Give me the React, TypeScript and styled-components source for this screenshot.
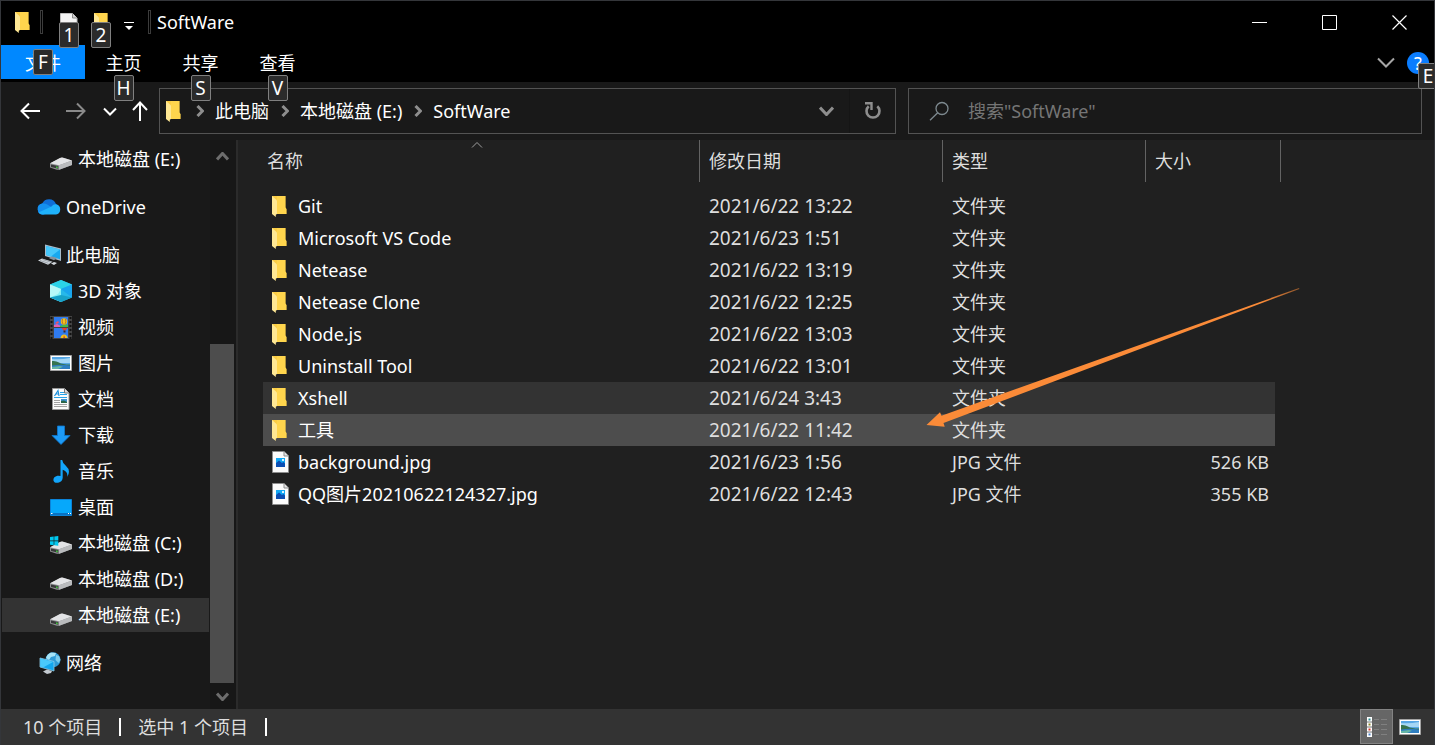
import React from "react";
import styled, { createGlobalStyle, css } from "styled-components";

const GlobalStyle = createGlobalStyle`
  *, *::before, *::after { box-sizing: border-box; }
  body {
    margin: 0;
    background: #191919;
    color: #fff;
    font: 18px/24px "Noto Sans", "Noto Sans CJK SC", sans-serif;
  }
  button, input { font: inherit; color: inherit; }
  button { border: 0; padding: 0; background: none; }
  svg { display: block; flex: none; }
`;

/* ---------- window frame ---------- */

const Window = styled.div`
  display: flex;
  flex-direction: column;
  min-height: 100vh;
  border: 1px solid #34363a;
  border-bottom: 0;
  overflow: hidden;
`;

const TitleBar = styled.header`
  display: flex;
  align-items: center;
  height: 44px;
  padding: 0 0 2px 14px;
  background: #000;
`;

const TitleDivider = styled.span`
  width: 3px;
  height: 24px;
  border: 1px solid #3c3c3c;
`;

const QuickTools = styled.div`
  display: flex;
  align-items: center;
  flex: none;
  gap: 14px;
  margin: 0 14px 0 17px;
`;

const AppIcon = styled.span`
  margin-right: 10px;
`;

const QuickButton = styled.button<{ $menu?: boolean }>`
  position: relative;
  display: flex;
  justify-content: center;
  align-items: ${(p) => (p.$menu ? "flex-end" : "flex-start")};
  width: ${(p) => (p.$menu ? 10 : 18)}px;
  height: 18px;
`;

const WindowTitle = styled.h1`
  flex: 1;
  margin: 0 0 0 6px;
  font-size: 18px;
  font-weight: 400;
`;

const CaptionButton = styled.button`
  display: flex;
  align-items: center;
  justify-content: center;
  width: 70px;
  height: 42px;
`;

const KeyTip = styled.kbd<{ $top: number; $left?: string }>`
  position: absolute;
  z-index: 2;
  top: ${(p) => p.$top}px;
  left: ${(p) => p.$left ?? "50%"};
  transform: translateX(-50%);
  width: 20px;
  height: 26px;
  border: 1px solid #808080;
  border-radius: 2px;
  background: #2b2b2b;
  color: #fff;
  font: 19px/24px "Noto Sans", sans-serif;
  text-align: center;
`;

const Ribbon = styled.nav`
  display: flex;
  height: 37px;
  background: #000;
`;

const RibbonTab = styled.button<{ $file?: boolean }>`
  position: relative;
  width: ${(p) => (p.$file ? 84 : 77)}px;
  height: 34px;
  padding-top: 2px;
  background: ${(p) => (p.$file ? "#0088ff" : "none")};
`;

const RibbonEnd = styled.div`
  display: flex;
  align-items: center;
  gap: 12px;
  margin-left: auto;
  padding: 0 5px 2px 0;
`;

const HelpButton = styled.button`
  position: relative;
  width: 22px;
  height: 22px;
  border-radius: 50%;
  background: #0a7dff;
  line-height: 22px;
`;

/* ---------- navigation row ---------- */

const NavRow = styled.div`
  display: flex;
  align-items: center;
  height: 58px;
  padding: 0 12px 0 18px;
  background: #191919;
`;

const NavButton = styled.button<{ $gap: number }>`
  margin-right: ${(p) => p.$gap}px;
`;

const AddressBar = styled.div`
  display: flex;
  align-items: center;
  flex: 729 1 0;
  height: 46px;
  padding-left: 6px;
  border: 1px solid #535353;
`;

const Crumbs = styled.ol`
  display: flex;
  align-items: center;
  flex: 1;
  margin: 0 0 0 3px;
  padding: 0;
  list-style: none;
`;

const Crumb = styled.li`
  display: flex;
  align-items: center;
  gap: 11px;
  margin-left: 12px;
  white-space: nowrap;
`;

const CrumbLink = styled.a`
  color: #fff;
  text-decoration: none;
`;

const AddressButton = styled.button`
  display: flex;
  align-items: center;
  justify-content: center;
  width: 46px;
  height: 44px;
  & + & { border-left: 1px solid #151515; }
`;

const SearchBox = styled.label`
  display: flex;
  align-items: center;
  flex: 492 1 0;
  gap: 19px;
  height: 46px;
  margin-left: 12px;
  padding-left: 20px;
  border: 1px solid #535353;
`;

const SearchInput = styled.input`
  flex: 1;
  min-width: 0;
  padding: 0;
  border: 0;
  outline: 0;
  background: none;
  &::placeholder { color: #757575; opacity: 1; }
`;

/* ---------- body ---------- */

const Main = styled.div`
  display: flex;
  flex: 1;
`;

const Sidebar = styled.aside`
  display: flex;
  width: 237px;
  border-right: 2px solid #2b2b2b;
  background: #191919;
`;

const Tree = styled.nav`
  display: flex;
  flex-direction: column;
  flex: 1;
  gap: 14px;
  padding: 2px 1px 29px;
`;

const TreeGroup = styled.div`
  display: flex;
  flex-direction: column;
  gap: 2px;
`;

const TreeRow = styled.a<{ $level: number; $selected?: boolean }>`
  display: flex;
  align-items: center;
  gap: 4px;
  height: 34px;
  padding-left: ${(p) => (p.$level === 1 ? 36 : 48)}px;
  background: ${(p) => (p.$selected ? "#333" : "none")};
  color: #fff;
  text-decoration: none;
  white-space: nowrap;
`;

const TreeIcon = styled.span`
  display: flex;
  width: 24px;
`;

const Scrollbar = styled.div`
  display: flex;
  flex-direction: column;
  width: 26px;
  padding-right: 2px;
  background: #171717;
`;

const ScrollButton = styled.button<{ $height: number }>`
  display: flex;
  align-items: center;
  justify-content: center;
  height: ${(p) => p.$height}px;
`;

const ScrollSpace = styled.div`
  flex: 172 1 0;
`;

const ScrollThumb = styled.div`
  flex: 339 1 0;
  background: #4d4d4d;
`;

const FilePane = styled.main`
  position: relative;
  flex: 1;
  padding-left: 25px;
  background: #202020;
`;

const FileTable = styled.table`
  width: 1018px;
  table-layout: fixed;
  border-spacing: 0;
  text-align: left;
`;

const HeaderCell = styled.th<{ $width: number }>`
  position: relative;
  width: ${(p) => p.$width}px;
  height: 50px;
  padding: 0 0 8px;
  color: #dedede;
  font-weight: 400;
`;

const HeaderLabel = styled.div<{ $indent: number }>`
  height: 42px;
  padding-left: ${(p) => p.$indent}px;
  border-right: 1px solid #636363;
  line-height: 42px;
`;

const SortMark = styled.span`
  position: absolute;
  top: 1px;
  left: 49%;
  transform: translateX(-50%);
`;

const stateColor = { hover: "#333333", selected: "#4d4d4d" };

const FileRow = styled.tr<{ $state?: "hover" | "selected" }>`
  height: 32px;
  ${(p) =>
    p.$state &&
    css`
      & > td { background-color: ${stateColor[p.$state]}; }
    `}
`;

const Cell = styled.td`
  padding: 0 0 0 9px;
  color: #dedede;
  white-space: nowrap;
`;

const NameCell = styled(Cell)`
  padding-left: 9px;
  color: #fff;
`;

const DateCell = styled(Cell)`
  font-size: 19px;
`;

const SizeCell = styled(Cell)`
  padding-right: 6px;
  border-right: 6px solid transparent;
  background-clip: padding-box;
  text-align: right;
`;

const FileName = styled.div`
  display: flex;
  align-items: center;
  gap: 8px;
`;

const FileIconBox = styled.span`
  width: 18px;
`;

const Pointer = styled.svg`
  position: absolute;
  top: 147px;
  left: 688px;
  pointer-events: none;
`;

/* ---------- status bar ---------- */

const StatusBar = styled.footer`
  display: flex;
  align-items: center;
  height: 36px;
  padding: 0 8px 1px 22px;
  background: #333;
  color: #dedede;
`;

const StatusDivider = styled.span`
  width: 2px;
  height: 18px;
  margin: 0 17px;
  background: #fff;
`;

const Views = styled.div`
  display: flex;
  align-items: center;
  margin-left: auto;
`;

const ViewButton = styled.button<{ $active?: boolean }>`
  display: flex;
  align-items: center;
  justify-content: center;
  width: 33px;
  height: 35px;
  border: 1px solid ${(p) => (p.$active ? "#838383" : "transparent")};
  background: ${(p) => (p.$active ? "#666" : "none")};
`;

/* ---------- icons ---------- */

const FolderIcon = () => (
  <svg width="15" height="21" viewBox="0 0 15 21">
    <path d="M0 0h13.4v11.5l1 1.5v5H3L0 15z" fill="#fbcd45" />
    <path d="M5 0h8.4v11.5l1 1.5v5H5z" fill="#ffd54d" />
    <path d="M0 0l4 3.600c.8.7 1 1.200 1 2.400V18l-1.200.8V21L0 18z" fill="#ffe894" />
  </svg>
);

const ImageFileIcon = () => (
  <svg width="17" height="22" viewBox="0 0 17 22">
    <path d="M.5.5h11.500l4.500 4.500v16.500H.5z" fill="#fbfbfb" stroke="#8d8d8d" />
    <path d="M12 .5V5h4.500" fill="#e4e4e4" stroke="#8d8d8d" />
    <path d="M4 7h9v9H4z" fill="#12a8f5" />
    <path d="M4 12l3-2.500 3 2.500 1.500-1 1.500 1.500V16H4z" fill="#0c4fb4" />
    <path d="M10 8h2v2h-2z" fill="#d8f2ff" />
  </svg>
);

const DriveShape = () => (
  <g>
    <path d="M0 6.500L10 1q2-.8 4 0l8 2.500v4.500L10 12.500q-2 .6-4 0L0 10.500z" fill="#8f9193" />
    <path d="M0 6.300L10 1q2-.8 4 0l8 2.500L9 8.200z" fill="#e3e4e6" />
    <path d="M9 8.200L22 3.500V8L9 12.800z" fill="#b9bbbd" />
    <path d="M1 7.400l7.300 1.700v2.700L1 9.900z" fill="#38393a" />
    <path d="M6 9.400l1.700.4v1.400L6 10.800z" fill="#3fd13c" />
  </g>
);

const DriveIcon = () => (
  <svg width="22" height="22" viewBox="0 -9 22 22"><DriveShape /></svg>
);

const SystemDriveIcon = () => (
  <svg width="22" height="22" viewBox="0 -9 22 22">
    <DriveShape />
    <path d="M0-4l3.700-.5V-.4H0zM4.300-4.600L8.300-5v4.600h-4zM0 .3h3.700v3.900L0 3.700zM4.300.3h4v4.500l-4-.5z" fill="#00c8f0" />
  </svg>
);

const OneDriveIcon = () => (
  <svg width="24" height="16" viewBox="1 0 24 16" overflow="visible">
    <path d="M6 15.500a5.500 5.500 0 01-.8-10.900A7.500 7.500 0 0119 5a6 6 0 014 6l-9 3z" fill="#0f6fd8" />
    <path d="M5.200 4.600q3-.4 5 1l7.500 4.400L6 15.500a5.500 5.500 0 01-.8-10.900z" fill="#1490ee" />
    <path d="M14.500 7.600q2-2.800 5-2.200a5.200 5.200 0 01-.5 10.100H6q-2.800 0-4.500-2z" fill="#1fb2fb" />
  </svg>
);

const ComputerIcon = () => (
  <svg width="24" height="22" viewBox="0 0 24 22">
    <path d="M7 .5l16 4V17L7 12z" fill="#a9bccb" />
    <path d="M8.200 2L22 5.500v9.800L8.200 11.100z" fill="#18a9ef" />
    <path d="M8.200 2L22 5.500l-9 6.900-4.800-1.400z" fill="#46c8fb" />
    <path d="M11 14.200l3-1.700 5 1.500-3 2.300z" fill="#85929d" />
    <path d="M0 16.500L4 14.500l10.500 3.300-4.500 3z" fill="#d4d9de" />
    <path d="M2 16.500l8.500 2.800M4.500 15.500l8.300 2.600" stroke="#8d979f" strokeWidth=".8" />
    <path d="M13 19.500l3-1.500 3 1-3 2z" fill="#d4d9de" />
  </svg>
);

const CubeIcon = () => (
  <svg width="22" height="22" viewBox="0 0 22 22">
    <path d="M0 4.500L11 0l11 4.500v13L11 22 0 17.500z" fill="#27b8ea" />
    <path d="M0 4.500L11 0l11 4.500L11 9z" fill="#2bd3e8" />
    <path d="M0 4.500L11 9v13L0 17.500z" fill="#84f0f4" />
    <path d="M0 4.500L11 9 8 14 0 17.500z" fill="#b6f9f8" />
    <path d="M11 9l11-4.500v13z" fill="#19a5ee" />
    <path d="M0 17.500L11 15v7zM22 17.500L11 15v7z" fill="#18a2c9" />
  </svg>
);

const VideoIcon = () => (
  <svg width="22" height="23" viewBox="0 0 22 23">
    <path d="M0 0h22v23H0z" fill="#444" />
    <path d="M1.500 1v22M20.500 1v22" stroke="#121212" strokeWidth="2" strokeDasharray="2 2" />
    <path d="M4 1h14v10H4zM4 12h14v10H4z" fill="#2f7bf0" />
    <path d="M4 9l3-1 3 1.500V11H4z" fill="#e65fae" />
    <path d="M10 10l5-2 3 1v2h-8z" fill="#43b948" />
    <circle cx="14" cy="5.500" r="3.200" fill="#f0c21d" />
    <path d="M12.500 3q-1 3 .7 5.500M15.500 3q1 3-.7 5.500" stroke="#b5602c" strokeWidth=".8" fill="none" />
    <path d="M5 7l3-2 1 1.500L7 8z" fill="#ee5362" />
    <path d="M11.500 12h6l-2 2.500h-2z" fill="#e0422f" />
    <path d="M13.500 14.500h2v2h-2z" fill="#342c33" />
    <path d="M10.500 22q.5-3.500 3.500-3.500t3.500 3.500z" fill="#f0c21d" />
    <path d="M13.300 22l.7-3 1 3z" fill="#d33a2c" />
  </svg>
);

const PictureIcon = () => (
  <svg width="22" height="16" viewBox="0 0 22 16">
    <path d="M.5.5h21v15H.5z" fill="#fff" stroke="#a3a3a3" />
    <path d="M2 2h18v12H2z" fill="#57a8e6" />
    <path d="M2 4q8 1 18-1v5H2z" fill="#a5d7f5" />
    <path d="M2 6q4-.5 7 1.500t11 2V11H2z" fill="#35744f" />
    <path d="M2 10.500q9-1.500 18 0V14H2z" fill="#2e7ec0" />
    <path d="M2 12l8-1 3 .7L8 14H2z" fill="#65b5a5" />
  </svg>
);

const DocumentIcon = () => (
  <svg width="22" height="22" viewBox="-2 0 22 22">
    <path d="M.5.5h12l4.500 4.500v16.500H.5z" fill="#fbfbfb" stroke="#979797" />
    <path d="M12.500.5V5H17" fill="#ddd" stroke="#777" />
    <path d="M2.500 8L6 2.500 7 8M4 6h3" stroke="#1b8fdc" strokeWidth="1.200" fill="none" />
    <path d="M8 4.500h4M8 6.500h7M2 9.500h13" stroke="#27a3e8" />
    <path d="M2 12.500h6M2 14.500h6M2 16.500h13M2 18.500h13" stroke="#a2a2a2" />
    <path d="M9 11h6v4H9z" fill="#3e93d2" />
    <path d="M9 13l3-.5 3 1.500v1H9z" fill="#2a664a" />
  </svg>
);

const DownloadIcon = () => (
  <svg width="22" height="20" viewBox="0 0 22 20">
    <path d="M7.500 1h7v9.500H20L11 19.500 2 10.500h5.500z" fill="#1d9bf7" stroke="#0c77cf" strokeWidth=".8" />
  </svg>
);

const MusicIcon = () => (
  <svg width="22" height="23" viewBox="0 0 22 23">
    <path d="M10.500 0h1.700q.5 3.300 3.400 5.600 5.800 5 1.600 11.400 1-5.500-4.500-7.300v8.100q-.2 4-4.600 4.900-4.200.5-4.700-2.500-.2-3.300 4-4.400 1.800-.3 3.100.3z" fill="#12a5fb" />
  </svg>
);

const DesktopIcon = () => (
  <svg width="22" height="17" viewBox="0 0 22 17">
    <path d="M.5.5h21v16H.5z" fill="#06a8fb" stroke="#0b83d8" />
    <path d="M1 14h20v2H1z" fill="#0873c4" />
    <path d="M1 14.500h1.500M18 14.500h1M20 14.500h1" stroke="#fff" />
  </svg>
);

const NetworkIcon = () => (
  <svg width="23" height="22" viewBox="-1 0 23 22">
    <circle cx="14" cy="7.700" r="7.500" fill="#2f9bd6" />
    <path d="M7 6q1-4 5-5.500l5 .5-1 3-4 1-2 3z" fill="#a6e3f6" />
    <path d="M17 3l3 1 1.500 4-2 3-3-3z" fill="#7cccec" />
    <path d="M1 6l14 3.500v9.500L1 15z" fill="#13a7ee" stroke="#91cde9" strokeWidth=".8" />
    <path d="M1.500 6.500L14 10 4 15.500l-2.500-.7z" fill="#4ac9fb" />
    <path d="M4 19.500l4-2 5 1.500-1 2-4 1z" fill="#c3cad0" />
  </svg>
);

const DetailsIcon = () => (
  <svg width="22" height="22" viewBox="0 0 22 22">
    <path d="M1 1h5v20H1z" fill="#fff" />
    <path d="M1 6h5M1 11h5M1 16h5" stroke="#777" />
    <path d="M2.500 2.500h2v2h-2z" fill="#2c8d91" />
    <path d="M2.500 7.500h2v2h-2z" fill="#8e8428" />
    <path d="M2.500 12.500h2v2h-2z" fill="#d3372a" />
    <path d="M2.500 17.500h2v2h-2z" fill="#4e82c9" />
    <path d="M8 3.500h5M15 3.500h6M8 8.500h5M15 8.500h6M8 13.500h5M15 13.500h6M8 18.500h5M15 18.500h6" stroke="#808080" />
  </svg>
);

const NewDocIcon = () => (
  <svg width="18" height="22" viewBox="0 0 18 22">
    <path d="M.5.5h12L17 5v16.500H.5z" fill="#f4f4f4" stroke="#bdbdbd" />
    <path d="M12.500.5V5H17" fill="#d0d0d0" stroke="#8c8c8c" />
  </svg>
);

const Chevron = ({ dir, size, color, weight = 2 }: {
  dir: "up" | "down" | "right"; size: number; color: string; weight?: number;
}) => {
  const h = Math.round(size / 2) + 2;
  const d = {
    up: `M1 ${h - 1.5}L${size / 2} 1.500L${size - 1} ${h - 1.5}`,
    down: `M1 1.500L${size / 2} ${h - 1.5}L${size - 1} 1.500`,
    right: `M1.500 1L${h - 1.5} ${size / 2}L1.500 ${size - 1}`,
  }[dir];
  const [w, t] = dir === "right" ? [h, size] : [size, h];
  return (
    <svg width={w} height={t} viewBox={`0 0 ${w} ${t}`}>
      <path d={d} fill="none" stroke={color} strokeWidth={weight} />
    </svg>
  );
};

const ArrowIcon = ({ d, color, width = 22 }: { d: string; color: string; width?: number }) => (
  <svg width={width} height="22" viewBox={`0 0 ${width} 22`}>
    <path d={d} fill="none" stroke={color} strokeWidth="2" />
  </svg>
);

/* ---------- data ---------- */

type TreeItem = { label: string; icon: React.ReactNode; level: number; selected?: boolean };

const tree: TreeItem[][] = [
  [{ label: "本地磁盘 (E:)", icon: <DriveIcon />, level: 2 }],
  [{ label: "OneDrive", icon: <OneDriveIcon />, level: 1 }],
  [
    { label: "此电脑", icon: <ComputerIcon />, level: 1 },
    { label: "3D 对象", icon: <CubeIcon />, level: 2 },
    { label: "视频", icon: <VideoIcon />, level: 2 },
    { label: "图片", icon: <PictureIcon />, level: 2 },
    { label: "文档", icon: <DocumentIcon />, level: 2 },
    { label: "下载", icon: <DownloadIcon />, level: 2 },
    { label: "音乐", icon: <MusicIcon />, level: 2 },
    { label: "桌面", icon: <DesktopIcon />, level: 2 },
    { label: "本地磁盘 (C:)", icon: <SystemDriveIcon />, level: 2 },
    { label: "本地磁盘 (D:)", icon: <DriveIcon />, level: 2 },
    { label: "本地磁盘 (E:)", icon: <DriveIcon />, level: 2, selected: true },
  ],
  [{ label: "网络", icon: <NetworkIcon />, level: 1 }],
];

type FileItem = { name: string; date: string; size?: string; state?: "hover" | "selected" };

const files: FileItem[] = [
  { name: "Git", date: "2021/6/22 13:22" },
  { name: "Microsoft VS Code", date: "2021/6/23 1:51" },
  { name: "Netease", date: "2021/6/22 13:19" },
  { name: "Netease Clone", date: "2021/6/22 12:25" },
  { name: "Node.js", date: "2021/6/22 13:03" },
  { name: "Uninstall Tool", date: "2021/6/22 13:01" },
  { name: "Xshell", date: "2021/6/24 3:43", state: "hover" },
  { name: "工具", date: "2021/6/22 11:42", state: "selected" },
  { name: "background.jpg", date: "2021/6/23 1:56", size: "526 KB" },
  { name: "QQ图片20210622124327.jpg", date: "2021/6/22 12:43", size: "355 KB" },
];

const columns = [
  { label: "名称", width: 437, indent: 4 },
  { label: "修改日期", width: 243, indent: 9 },
  { label: "类型", width: 203, indent: 9 },
  { label: "大小", width: 135, indent: 9 },
];

const ribbonTabs = [
  { label: "主页", tip: "H" },
  { label: "共享", tip: "S" },
  { label: "查看", tip: "V" },
];

export default function App() {
  return (
    <>
      <GlobalStyle />
      <Window>
        <TitleBar>
          <AppIcon><FolderIcon /></AppIcon>
          <TitleDivider />
          <QuickTools>
            <QuickButton aria-label="属性">
              <NewDocIcon />
              <KeyTip $top={9}>1</KeyTip>
            </QuickButton>
            <QuickButton aria-label="新建文件夹">
              <FolderIcon />
              <KeyTip $top={9}>2</KeyTip>
            </QuickButton>
            <QuickButton $menu aria-label="自定义快速访问工具栏">
              <svg width="10" height="9" viewBox="0 0 10 9">
                <path d="M0 0h10v1H0zM1 4h8L5 8z" fill="#fff" />
              </svg>
            </QuickButton>
          </QuickTools>
          <TitleDivider />
          <WindowTitle>SoftWare</WindowTitle>
          <CaptionButton aria-label="最小化">
            <svg width="15" height="15"><path d="M0 7.500h15" stroke="#fff" /></svg>
          </CaptionButton>
          <CaptionButton aria-label="最大化">
            <svg width="15" height="15"><path d="M.5.5h14v14H.5z" fill="none" stroke="#fff" /></svg>
          </CaptionButton>
          <CaptionButton aria-label="关闭">
            <svg width="15" height="15"><path d="M.5.5l14 14M14.500.5l-14 14" stroke="#fff" strokeWidth="1.200" /></svg>
          </CaptionButton>
        </TitleBar>

        <Ribbon>
          <RibbonTab $file>
            文件
            <KeyTip $top={4}>F</KeyTip>
          </RibbonTab>
          {ribbonTabs.map((t) => (
            <RibbonTab key={t.label}>
              {t.label}
              <KeyTip $top={30}>{t.tip}</KeyTip>
            </RibbonTab>
          ))}
          <RibbonEnd>
            <Chevron dir="down" size={18} color="#a6a6a6" />
            <HelpButton aria-label="帮助">
              ?
              <KeyTip $top={11} $left="21px">E</KeyTip>
            </HelpButton>
          </RibbonEnd>
        </Ribbon>

        <NavRow>
          <NavButton $gap={24} aria-label="后退">
            <ArrowIcon d="M21 11H3M10 3.500L2.500 11l7.500 7.500" color="#fff" />
          </NavButton>
          <NavButton $gap={16} aria-label="前进">
            <ArrowIcon d="M1 11h18M12 3.500l7.500 7.500-7.500 7.500" color="#8a8a8a" />
          </NavButton>
          <NavButton $gap={15} aria-label="最近浏览的位置">
            <Chevron dir="down" size={14} color="#fff" />
          </NavButton>
          <NavButton $gap={11} aria-label="上移">
            <ArrowIcon width={16} d="M8 21V3M1 10l7-7.500 7 7.500" color="#fff" />
          </NavButton>
          <AddressBar>
            <FolderIcon />
            <Crumbs>
              {["此电脑", "本地磁盘 (E:)", "SoftWare"].map((c) => (
                <Crumb key={c}>
                  <Chevron dir="right" size={12} color="#8e8e8e" weight={3} />
                  <CrumbLink href="#">{c}</CrumbLink>
                </Crumb>
              ))}
            </Crumbs>
            <AddressButton aria-label="以前的位置">
              <Chevron dir="down" size={15} color="#8e8e8e" weight={3} />
            </AddressButton>
            <AddressButton aria-label="刷新">
              <svg width="18" height="18" viewBox="0 0 18 18">
                <path d="M4.700 4.200A6.500 6.500 0 1013.300 4.200" fill="none" stroke="#8e8e8e" strokeWidth="2.600" />
                <path d="M1 1.300h6.500V8" fill="none" stroke="#8e8e8e" strokeWidth="2.400" />
              </svg>
            </AddressButton>
          </AddressBar>
          <SearchBox>
            <svg width="20" height="20" viewBox="0 0 20 20">
              <circle cx="13" cy="7.500" r="6" fill="none" stroke="#7e8a90" strokeWidth="1.300" />
              <path d="M8.700 11.800L1 19.200" stroke="#7e8a90" strokeWidth="1.300" />
            </svg>
            <SearchInput aria-label="搜索" placeholder={'搜索"SoftWare"'} />
          </SearchBox>
        </NavRow>

        <Main>
          <Sidebar>
            <Tree>
              {tree.map((group, i) => (
                <TreeGroup key={i}>
                  {group.map((item) => (
                    <TreeRow key={item.label} href="#" $level={item.level} $selected={item.selected}>
                      <TreeIcon>{item.icon}</TreeIcon>
                      {item.label}
                    </TreeRow>
                  ))}
                </TreeGroup>
              ))}
            </Tree>
            <Scrollbar>
              <ScrollButton $height={32} aria-label="向上滚动">
                <Chevron dir="up" size={13} color="#6d6d6d" weight={3} />
              </ScrollButton>
              <ScrollSpace />
              <ScrollThumb />
              <ScrollButton $height={26} aria-label="向下滚动">
                <Chevron dir="down" size={13} color="#6d6d6d" weight={3} />
              </ScrollButton>
            </Scrollbar>
          </Sidebar>

          <FilePane>
            <FileTable>
              <thead>
                <tr>
                  {columns.map((c, i) => (
                    <HeaderCell key={c.label} $width={c.width}>
                      <HeaderLabel $indent={c.indent}>{c.label}</HeaderLabel>
                      {i === 0 && (
                        <SortMark>
                          <Chevron dir="up" size={12} color="#a0a0a0" weight={1} />
                        </SortMark>
                      )}
                    </HeaderCell>
                  ))}
                </tr>
              </thead>
              <tbody>
                {files.map((f) => (
                  <FileRow key={f.name} $state={f.state}>
                    <NameCell>
                      <FileName>
                        <FileIconBox>{f.size ? <ImageFileIcon /> : <FolderIcon />}</FileIconBox>
                        {f.name}
                      </FileName>
                    </NameCell>
                    <DateCell>{f.date}</DateCell>
                    <Cell>{f.size ? "JPG 文件" : "文件夹"}</Cell>
                    <SizeCell>{f.size}</SizeCell>
                  </FileRow>
                ))}
              </tbody>
            </FileTable>
            <Pointer width="374" height="142" viewBox="0 0 374 142" aria-hidden="true">
              <defs>
                <linearGradient id="tail" x1="0" x2="1" y1="0" y2="0">
                  <stop offset="0.9" stopColor="#fb8b38" />
                  <stop offset="1" stopColor="#fb8b38" stopOpacity="0.5" />
                </linearGradient>
              </defs>
              <path d="M.5 138L14 125.300l1.500 3.400L373 1l.4 1L17.500 136l1.200 3.700z" fill="url(#tail)" />
            </Pointer>
          </FilePane>
        </Main>

        <StatusBar>
          <span>10 个项目</span>
          <StatusDivider />
          <span>选中 1 个项目</span>
          <StatusDivider />
          <Views>
            <ViewButton $active aria-label="详细信息"><DetailsIcon /></ViewButton>
            <ViewButton aria-label="大图标"><PictureIcon /></ViewButton>
          </Views>
        </StatusBar>
      </Window>
    </>
  );
}
